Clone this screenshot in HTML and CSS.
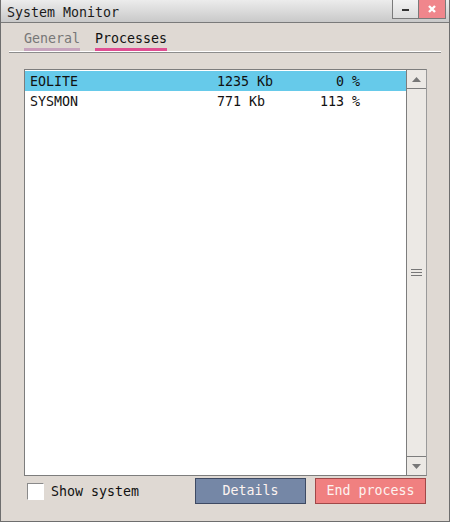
FILE: index.html
```html
<!DOCTYPE html>
<html lang="en">

<head>
  <meta charset="UTF-8">
  <meta name="viewport" content="width=device-width, initial-scale=1.0">
  <title>System Monitor</title>

  <link rel="stylesheet" href="styles.css">
</head>

<body>
  <div class="window">
    <div class="titlebar">
      <span class="title">System Monitor</span>
      <div class="controls">
        <a class="btn-min" href="#"><span></span></a>
        <a class="btn-close" href="#">
          <svg width="10" height="10" viewBox="0 0 10 10">
            <path d="M2 2 L8 8 M8 2 L2 8" stroke="#fff" stroke-width="2.4" />
          </svg>
        </a>
      </div>
    </div>

    <div class="content">
      <div class="tabs">
        <ul>
          <li class="tab">General</li>
          <li class="tab active">Processes</li>
        </ul>
      </div>

      <div class="list">
        <ul class="rows">
          <li class="selected">
            <span class="name">EOLITE</span>
            <span class="mem">1235 Kb</span>
            <span class="cpu">0 %</span>
          </li>
          <li>
            <span class="name">SYSMON</span>
            <span class="mem">771 Kb</span>
            <span class="cpu">113 %</span>
          </li>
        </ul>
        <div class="scrollbar">
          <div class="sb-btn">
            <svg width="9" height="5" viewBox="0 0 9 5"><path d="M4.5 0 L9 5 L0 5 Z" fill="#777" /></svg>
          </div>
          <div class="sb-track">
            <div class="grip"><i></i><i></i><i></i></div>
          </div>
          <div class="sb-btn">
            <svg width="9" height="5" viewBox="0 0 9 5"><path d="M0 0 L9 0 L4.5 5 Z" fill="#777" /></svg>
          </div>
        </div>
      </div>

      <div class="footer">
        <label class="check"><span class="box"></span>Show system</label>
        <div class="buttons">
          <a class="button details" href="#">Details</a>
          <a class="button end" href="#">End process</a>
        </div>
      </div>
    </div>
  </div>
</body>

</html>
```

FILE: styles.css
```css
* {
  margin: 0;
  padding: 0;
  box-sizing: border-box;
}

body {
  font-family: "DejaVu Sans Mono", monospace;
  font-size: 13.3px;
  color: #111;
  background: #fff;
}

li {
  list-style: none;
}

a {
  text-decoration: none;
}

.window {
  width: 450px;
  height: 522px;
  border: 1px solid #6e6e6e;
  border-top: 0;
  background-color: #dfd9d3;
  display: flex;
  flex-direction: column;
}

.titlebar {
  height: 23px;
  display: flex;
  justify-content: space-between;
  background: linear-gradient(#ececec, #c9c9c9);
  border-bottom: 1px solid #7a7a7a;
}

.title {
  padding: 4px 0 0 6px;
  line-height: 17px;
  color: #1a1a1a;
}

.controls {
  display: flex;
  margin-right: 3px;
}

.controls a {
  width: 27px;
  height: 19px;
  display: flex;
  align-items: center;
  justify-content: center;
  border-right: 1px solid #7a7a7a;
  border-bottom: 1px solid #7a7a7a;
}

.btn-min {
  border-left: 1px solid #7a7a7a;
  background: linear-gradient(#f2f2f2, #dcdcdc);
}

.btn-min span {
  width: 7px;
  height: 2px;
  margin-top: 2px;
  background-color: #333;
}

.btn-close {
  background-color: #f0868c;
}

.content {
  flex: 1;
  display: flex;
  flex-direction: column;
  padding: 0 8px 0 8px;
}

.tabs {
  border-bottom: 1px solid #8c8c8c;
}

.tabs ul {
  display: flex;
  gap: 15px;
  padding: 7px 0 0 15px;
  border-bottom: 1px solid #fff;
}

.tab {
  line-height: 17px;
  padding-bottom: 1px;
  border-bottom: 3px solid #c7a4bd;
  color: #777;
}

.tab.active {
  color: #111;
  border-bottom-color: #df4e92;
}

.list {
  margin: 16px 14px 0 15px;
  height: 407px;
  display: flex;
  background-color: #fff;
  border: 1px solid #7d7d7d;
  border-right-color: #9a9a9a;
}

.rows {
  flex: 1;
  padding-top: 1px;
}

.rows li {
  display: flex;
  height: 20px;
  line-height: 22px;
  padding-left: 5px;
}

.rows li.selected {
  background-color: #66caea;
}

.name {
  width: 187px;
}

.mem {
  width: 88px;
}

.cpu {
  width: 55px;
  text-align: right;
}

.scrollbar {
  width: 20px;
  display: flex;
  flex-direction: column;
  background-color: #ece9e5;
  border-left: 1px solid #7d7d7d;
}

.sb-btn {
  height: 19px;
  display: flex;
  align-items: center;
  justify-content: center;
}

.sb-btn:first-child {
  border-bottom: 1px solid #7d7d7d;
}

.sb-btn:last-child {
  border-top: 1px solid #7d7d7d;
}

.sb-track {
  flex: 1;
  display: flex;
  align-items: center;
  justify-content: center;
}

.grip {
  display: flex;
  flex-direction: column;
  gap: 2px;
}

.grip i {
  display: block;
  width: 11px;
  height: 1px;
  background-color: #777;
}

.footer {
  display: flex;
  justify-content: space-between;
  align-items: center;
  margin: 2px 15px 0 15px;
}

.check {
  display: flex;
  align-items: center;
  gap: 7px;
  padding-left: 3px;
}

.box {
  width: 17px;
  height: 17px;
  background-color: #fff;
  border: 1px solid #8a8a8a;
  border-right-color: #fff;
  border-bottom-color: #fff;
}

.buttons {
  display: flex;
  gap: 9px;
}

.button {
  width: 111px;
  height: 26px;
  line-height: 24px;
  text-align: center;
  color: #fdf3f0;
  border: 1px solid;
}

.details {
  background-color: #7587a6;
  border-color: #3e4a63;
}

.end {
  background-color: #f08080;
  border-color: #a04848;
}
```
